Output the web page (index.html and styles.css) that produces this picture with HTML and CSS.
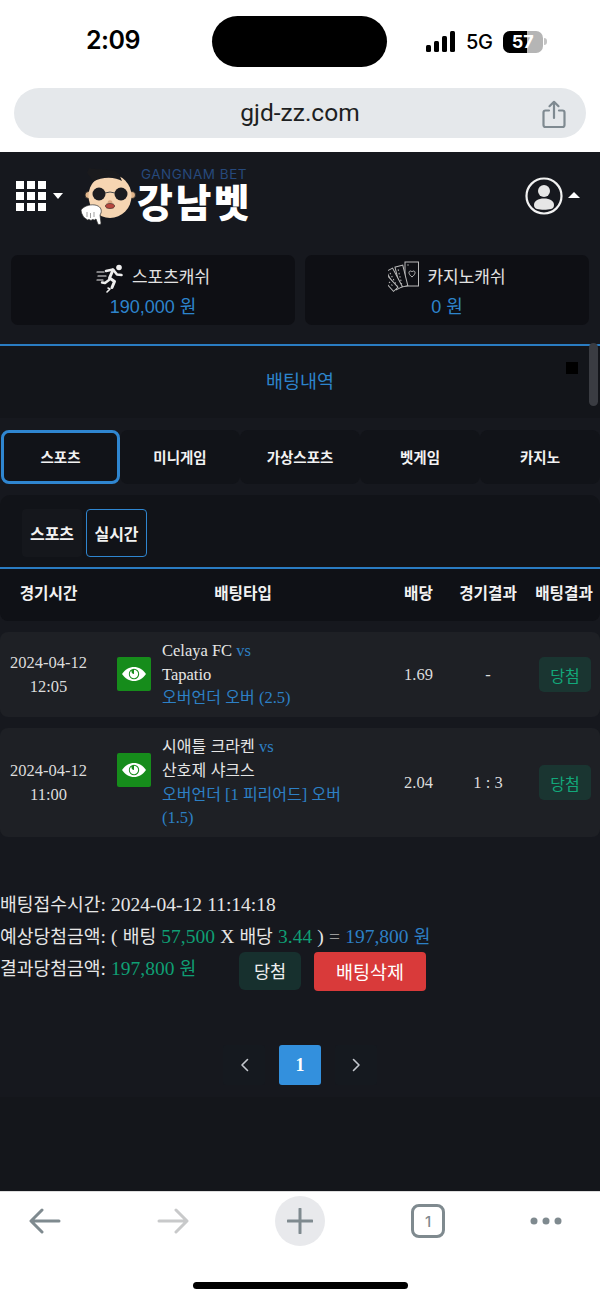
FILE: index.html
```html
<!DOCTYPE html>
<html lang="ko">
<head>
<meta charset="utf-8">
<title>강남벳 배팅내역</title>
<link rel="stylesheet" href="styles.css">
</head>
<body>
<div class="phone">
  <div class="status">
    <span class="clock">2:09</span>
    <span class="island"></span>
    <span class="signal"><i class="b1"></i><i class="b2"></i><i class="b3"></i><i class="b4"></i></span>
    <span class="net">5G</span>
    <span class="battery"><span class="fill"></span><span class="pct">57</span></span>
    <span class="nub"></span>
  </div>
  <div class="urlwrap">
    <div class="urlbar">
      <span></span>
      <span class="url">gjd-zz.com</span>
      <svg class="share" width="24" height="29" viewBox="0 0 24 29" fill="none" stroke="#7f8a91" stroke-width="2.2" stroke-linecap="round" stroke-linejoin="round"><path d="M7 10.5H3.500a2 2 0 0 0-2 2V25a2 2 0 0 0 2 2h17a2 2 0 0 0 2-2V12.500a2 2 0 0 0-2-2H17"/><path d="M12 18V2M7.500 6.200 12 1.800l4.500 4.400"/></svg>
    </div>
  </div>

  <main class="site">
    <header class="top">
      <div class="menu">
        <div class="dots"><i></i><i></i><i></i><i></i><i></i><i></i><i></i><i></i><i></i></div>
        <span class="caret-down"></span>
      </div>
      <div class="logo">
        <svg class="face" width="58" height="60" viewBox="0 0 58 60">
          <circle cx="9.500" cy="30" r="3.500" fill="#e0b48a" stroke="#222" stroke-width=".8"/>
          <circle cx="53" cy="30" r="3.500" fill="#e0b48a" stroke="#222" stroke-width=".8"/>
          <ellipse cx="31" cy="31" rx="21.500" ry="22" fill="#f6d5b2"/>
          <path d="M10 3l3 1 2-.5 3 1 3-.5 3 1 3-.5 3 1 3-.5 3 1 4 3 3 7c-6-4-20-5-29 1l-2-4-4-5z" fill="#1a1a1d"/>
          <circle cx="20" cy="29" r="6.500" fill="#1c1c20"/>
          <circle cx="42" cy="29" r="6.500" fill="#1c1c20"/>
          <path d="M26 28q5-2 10 0" stroke="#4a4a4a" stroke-width="1" fill="none"/>
          <path d="M29 36q2-1.500 4 0l.5 2h-5z" fill="#d9a884"/>
          <ellipse cx="31" cy="41" rx="4.500" ry="2.500" fill="#b8483f" stroke="#2a1a18" stroke-width=".6"/>
          <path d="M2 45c2-3 8-6 14-5 5 1 7 4 6 8l-1 2 1 8c0 2-3 2-3.500 0l-1.500-4-1.500 1-2-.5-1.500 1-2-1-1.500 .5-2-1.500-2-1.500-2-4z" fill="#fff" stroke="#2a2a2a" stroke-width=".7"/>
          <path d="M8 47v5M11.500 48v5M15 47v5" stroke="#777" stroke-width=".7"/>
        </svg>
        <div class="brand">
          <span class="brand-en">GANGNAM BET</span>
          <span class="brand-ko">강남벳</span>
        </div>
      </div>
      <div class="user">
        <svg width="38" height="38" viewBox="0 0 38 38" fill="none"><circle cx="19" cy="19" r="17.500" stroke="#f2f2f2" stroke-width="2.200"/><circle cx="19" cy="14" r="6" fill="#e6e6e6"/><path d="M9 28c0-4 4-6.500 10-6.500S29 24 29 28c0 2-1 3.500-3 4-4 1-10 1-14 0-2-.5-3-2-3-4z" fill="#e6e6e6"/></svg>
        <span class="caret-up"></span>
      </div>
    </header>

    <section class="cash">
      <div class="cash-card">
        <div class="cash-label">
          <svg width="28" height="30" viewBox="0 0 28 30" fill="none" stroke="#eee" stroke-linecap="round" stroke-linejoin="round"><circle cx="23" cy="4.500" r="2.800" fill="#eee" stroke="none"/><path d="M10 8l7-1.500 4 5 4.500 .5" stroke-width="2.600"/><path d="M17 7l-3.500 8 5 3.500-2.500 6" stroke-width="3"/><path d="M13 17l-4 3-3-.5" stroke-width="2.400"/><path d="M12 25l2 1-3 3" stroke-width="1.600"/><path d="M1 9h7M2 13h8M1 17h6" stroke-width="1.200"/></svg>
          <span>스포츠캐쉬</span>
        </div>
        <div class="cash-value">190,000 원</div>
      </div>
      <div class="cash-card">
        <div class="cash-label">
          <svg width="31" height="34" viewBox="0 0 31 34" fill="none" stroke="#bbb" stroke-width="1"><rect x="17" y="1" width="13.500" height="24" fill="#0e0f14"/><g transform="rotate(-14 14 26)"><rect x="12" y="5" width="8" height="21" fill="#0e0f14"/><path d="M14.500 8v15" stroke-dasharray="1.500 2"/></g><g transform="rotate(-28 10 28)"><rect x="8" y="7" width="7" height="21" fill="#0e0f14"/><path d="M10.500 10v15" stroke-dasharray="1.500 2"/></g><g transform="rotate(-42 7 29)"><rect x="5" y="9" width="6" height="20" fill="#0e0f14"/><path d="M8 12v14" stroke-dasharray="1.500 2"/></g><path d="M24 16c-4-3-3.500-6-1.500-6 .8 0 1.200.5 1.500 1 .3-.5.700-1 1.500-1 2 0 2.500 3-1.500 6z"/><circle cx="20" cy="4" r=".7" fill="#bbb" stroke="none"/></svg>
          <span>카지노캐쉬</span>
        </div>
        <div class="cash-value">0 원</div>
      </div>
    </section>

    <section class="title">
      <h1>배팅내역</h1>
      <span class="marker"></span>
      <span class="scrollbar"></span>
    </section>

    <nav class="tabs">
      <a class="tab active">스포츠</a>
      <a class="tab">미니게임</a>
      <a class="tab">가상스포츠</a>
      <a class="tab">벳게임</a>
      <a class="tab">카지노</a>
    </nav>

    <div class="subtabs">
      <a class="sub">스포츠</a>
      <a class="sub sub-on">실시간</a>
    </div>

    <div class="cols thead">
      <span>경기시간</span><span>배팅타입</span><span>배당</span><span>경기결과</span><span>배팅결과</span>
    </div>

    <div class="cols row">
      <div class="when">2024-04-12<br>12:05</div>
      <div class="match">
        <span class="eye"><svg width="26" height="16" viewBox="0 0 26 16"><path d="M1 8c3-4.500 7.500-7 12-7s9 2.500 12 7c-3 4.500-7.500 7-12 7S4 12.500 1 8z" fill="#fff"/><circle cx="13" cy="8" r="5.200" fill="#168c1b"/><path d="M13 3.800a4.200 4.200 0 1 1-2.500 .8c-.3 2 .8 3.400 2.500 3.400z" fill="#fff"/></svg></span>
        <div class="info">
          <div>Celaya FC <em>vs</em></div>
          <div>Tapatio</div>
          <div class="pick"><span class="ko">오버언더 오버</span> (2.5)</div>
        </div>
      </div>
      <div>1.69</div>
      <div>-</div>
      <div class="res"><span class="win">당첨</span></div>
    </div>

    <div class="cols row">
      <div class="when">2024-04-12<br>11:00</div>
      <div class="match">
        <span class="eye"><svg width="26" height="16" viewBox="0 0 26 16"><path d="M1 8c3-4.500 7.500-7 12-7s9 2.500 12 7c-3 4.500-7.500 7-12 7S4 12.500 1 8z" fill="#fff"/><circle cx="13" cy="8" r="5.200" fill="#168c1b"/><path d="M13 3.800a4.200 4.200 0 1 1-2.500 .8c-.3 2 .8 3.400 2.500 3.400z" fill="#fff"/></svg></span>
        <div class="info">
          <div><span class="ko">시애틀 크라켄</span> <em>vs</em></div>
          <div><span class="ko">산호제 샤크스</span></div>
          <div class="pick"><span class="ko">오버언더</span> [1 <span class="ko">피리어드</span>] <span class="ko">오버</span><br>(1.5)</div>
        </div>
      </div>
      <div>2.04</div>
      <div>1 : 3</div>
      <div class="res"><span class="win">당첨</span></div>
    </div>

    <section class="summary">
      <p><span class="ko">배팅접수시간</span>: 2024-04-12 11:14:18</p>
      <p><span class="ko">예상당첨금액</span>: ( <span class="ko">배팅</span> <b>57,500</b> X <span class="ko">배당</span> <b>3.44</b> ) <s>=</s> <u>197,800 <span class="ko">원</span></u></p>
      <div class="result-line">
        <p class="result-text"><span class="ko">결과당첨금액</span>: <b>197,800 <span class="ko">원</span></b></p>
        <a class="btn-win">당첨</a>
        <a class="btn-del">배팅삭제</a>
      </div>
    </section>

    <nav class="pager">
      <a class="page"><svg width="9" height="14" viewBox="0 0 9 14" fill="none" stroke="#c4c8ce" stroke-width="1.600" stroke-linecap="round" stroke-linejoin="round"><path d="M7.500 1.500 2 7l5.500 5.500"/></svg></a>
      <a class="page current">1</a>
      <a class="page"><svg width="9" height="14" viewBox="0 0 9 14" fill="none" stroke="#c4c8ce" stroke-width="1.600" stroke-linecap="round" stroke-linejoin="round"><path d="M1.500 1.500 7 7l-5.500 5.500"/></svg></a>
    </nav>
    <div class="site-foot"></div>
  </main>

  <footer class="browser">
    <div class="tools">
      <svg class="t-back" width="32" height="26" viewBox="0 0 32 26" fill="none" stroke="#7f8a8f" stroke-width="3" stroke-linecap="round" stroke-linejoin="round"><path d="M30 13H3M13 2 2 13l11 11"/></svg>
      <svg class="t-fwd" width="32" height="26" viewBox="0 0 32 26" fill="none" stroke="#c8c9ca" stroke-width="3" stroke-linecap="round" stroke-linejoin="round"><path d="M2 13h27M19 2l11 11-11 11"/></svg>
      <span class="plus"><svg width="26" height="26" viewBox="0 0 26 26" fill="none" stroke="#7f8a8f" stroke-width="3" stroke-linecap="round"><path d="M13 1v24M1 13h24"/></svg></span>
      <span class="tabcount">1</span>
      <svg class="t-more" width="32" height="8" viewBox="0 0 32 8" fill="#7f8a8f"><circle cx="4" cy="4" r="3.500"/><circle cx="16" cy="4" r="3.500"/><circle cx="28" cy="4" r="3.500"/></svg>
    </div>
    <span class="home"></span>
  </footer>
</div>
</body>
</html>
```

FILE: styles.css
```css
* { box-sizing: border-box; }
html, body { margin: 0; padding: 0; background: #fff; }
.phone {
  width: 600px; height: 1300px; overflow: hidden;
  display: flex; flex-direction: column;
  font-family: "Liberation Sans", "Noto Sans CJK KR", sans-serif;
}
p, h1 { margin: 0; font-weight: normal; }
em { font-style: normal; }

/* status bar */
.status { height: 88px; flex: none; display: flex; align-items: flex-start; padding-left: 86px; color: #000; }
.clock { width: 53px; margin-top: 25px; font: 600 25px/30px Inter, sans-serif; white-space: nowrap; letter-spacing: -.5px; }
.island { width: 175px; height: 51px; margin: 16px 0 0 73px; border-radius: 26px; background: #000; }
.signal { display: flex; align-items: flex-end; gap: 3px; height: 21px; margin: 31px 0 0 39px; }
.signal i { width: 5px; border-radius: 1.500px; background: #000; }
.b1 { height: 7px; } .b2 { height: 11px; } .b3 { height: 16px; } .b4 { height: 21px; }
.net { margin: 29px 0 0 11px; font: 500 20px/26px Inter, sans-serif; letter-spacing: -.3px; }
.battery { position: relative; width: 40px; height: 22px; margin: 31px 0 0 10px; border-radius: 7px; background: #b5b5b5; overflow: hidden; text-align: center; }
.fill { position: absolute; inset: 0 16px 0 0; background: #000; }
.pct { position: relative; color: #fff; font: 700 18px/22px Inter, sans-serif; }
.nub { width: 3px; height: 7px; margin: 38px 0 0 1px; background: #c4c4c4; border-radius: 0 3px 3px 0; }

/* url bar */
.urlwrap { height: 64px; flex: none; padding: 0 14px; }
.urlbar { height: 50px; border-radius: 25px; background: #e5e8eb; display: grid; grid-template-columns: 1fr auto 1fr; align-items: center; justify-items: end; padding-right: 20px; }
.url { font: 400 24.500px/30px Roboto, sans-serif; color: #1d1f22; margin-left: 20px; }
.share { margin-top: 2px; }

/* site */
.site { flex: none; height: 1039px; background: #16181e; display: flex; flex-direction: column; overflow: hidden; color: #fff; }
.top { height: 103px; flex: none; display: flex; align-items: flex-start; padding-left: 16px; }
.menu { display: flex; align-items: center; gap: 7px; margin-top: 29px; }
.dots { display: grid; grid-template-columns: repeat(3, 8px); grid-auto-rows: 8px; gap: 3px; }
.dots i { background: #fff; }
.caret-down { width: 0; height: 0; border: 5.500px solid transparent; border-top: 6px solid #fff; border-bottom: 0; }
.caret-up { width: 0; height: 0; border: 6.500px solid transparent; border-bottom: 6px solid #fff; border-top: 0; margin-top: -3px; }
.logo { display: flex; align-items: flex-start; margin: 13px 0 0 16px; }
.brand { display: flex; flex-direction: column; margin-left: 0; width: 115px; }
.brand-en { font: 400 13.500px/14px Inter, sans-serif; color: #26497c; letter-spacing: .5px; margin: 2px 0 0 4px; white-space: nowrap; }
.brand-ko { font: 900 39px/36px "Noto Sans CJK KR", sans-serif; color: #fff; letter-spacing: 2.500px; white-space: nowrap; margin-top: 1px; }
.user { margin: 25px 20px 0 auto; display: flex; align-items: center; gap: 5px; }

.cash { height: 70px; flex: none; margin: 0 11px; display: grid; grid-template-columns: 284px 284px; gap: 10px; }
.cash-card { background: #0e0f14; border-radius: 7px; text-align: center; padding-top: 8px; }
.cash-label { display: flex; justify-content: center; align-items: center; gap: 8px; height: 30px; font: 400 17px/30px "Liberation Sans", "Noto Sans CJK KR", sans-serif; color: #e2e2e2; }
.cash-value { font-size: 18px; line-height: 24px; color: #2d84cc; margin-top: 2px; }

.title { position: relative; flex: none; height: 74px; margin-top: 19px; border-top: 2px solid #2a7cc2; background: #13151a; display: flex; align-items: center; justify-content: center; }
.title h1 { font-size: 18.500px; color: #2d84cc; margin-top: -5px; }
.marker { position: absolute; left: 566px; top: 16px; width: 12px; height: 12px; background: #000; }
.scrollbar { position: absolute; left: 589px; top: -3px; width: 9px; height: 63px; border-radius: 5px; background: #3a3c42; }

.tabs { flex: none; height: 54px; margin-top: 12px; display: grid; grid-template-columns: repeat(5, 120px); }
.tab { display: flex; align-items: center; justify-content: center; background: #111318; border-radius: 8px; font-size: 14.500px; font-weight: 700; color: #f2f2f2; padding-bottom: 2px; }
.tab.active { border: 3px solid #2f86d0; margin-left: 1px; }

.subtabs { flex: none; height: 74px; margin-top: 11px; padding: 14px 22px 0; background: #111318; border-radius: 10px 10px 0 0; border-bottom: 2px solid #2a7cc2; display: flex; gap: 4px; align-items: flex-start; }
.sub { width: 60px; height: 48px; display: flex; align-items: center; justify-content: center; background: #15171c; font-size: 16px; font-weight: 700; border-radius: 4px; color: #f2f2f2; }
.sub-on { width: 61px; background: #111318; border: 1px solid #2f86d0; }

.cols { display: grid; grid-template-columns: 97px 292px 59px 80px 72px; align-items: center; text-align: center; }
.thead { flex: none; height: 52px; background: #0f1116; border-radius: 0 0 8px 8px; font-size: 15.700px; font-weight: 700; color: #f2f2f2; padding-bottom: 5px; }
.row { flex: none; margin-top: 11px; padding: 7px 0; background: #1e2025; border-radius: 8px; font: 400 16.500px/23.700px "Liberation Serif", "Noto Sans CJK KR", serif; color: #dcdcdc; }
.ko { font-family: "Noto Sans CJK KR", sans-serif; font-size: 16px; line-height: 1; }
.match { display: flex; align-items: flex-start; text-align: left; padding-left: 20px; gap: 11px; }
.eye { width: 34px; height: 34px; flex: none; display: flex; align-items: center; justify-content: center; background: #168c1b; border-radius: 2px; margin-top: 18px; }
.info { color: #e6e6e6; }
.info em, .pick { color: #2d80c6; }
.res { display: flex; justify-content: center; }
.win { width: 52px; height: 35px; display: flex; align-items: center; justify-content: center; border-radius: 5px; background: #1a3531; color: #12a87a; font: 400 16px/1 "Noto Sans CJK KR", sans-serif; margin-left: 2px; }

.summary { flex: none; margin-top: 52px; font: 400 19.500px/32px "Liberation Serif", "Noto Sans CJK KR", serif; color: #e6e6e6; white-space: nowrap; word-spacing: .3px; }
.summary .ko { font-size: 18.200px; }
.summary b { font-weight: 400; color: #0f9f74; }
.summary u { text-decoration: none; color: #2d80c6; }
.summary s { text-decoration: none; color: #9a9a9a; }
.result-line { display: flex; align-items: flex-start; height: 41px; }
.result-text { width: 239px; }
.btn-win { width: 62px; height: 38px; margin-top: -1px; display: flex; align-items: center; justify-content: center; background: #17302e; border-radius: 6px; font: 400 17.500px/1 "Noto Sans CJK KR", sans-serif; color: #eee; }
.btn-del { width: 112px; height: 39px; margin: -1px 0 0 13px; display: flex; align-items: center; justify-content: center; background: #d93a3a; border-radius: 4px; font: 400 18.500px/1 "Noto Sans CJK KR", sans-serif; color: #fff; }

.pager { flex: none; margin-top: 51px; height: 40px; display: flex; justify-content: center; gap: 14px; }
.page { width: 42px; height: 40px; display: flex; align-items: center; justify-content: center; background: #15191f; border-radius: 3px; }
.page.current { background: #3390dd; color: #fff; font: 700 18px/1 "Liberation Serif", serif; }
.site-foot { flex: 1; margin-top: 12px; background: #14161b; }

/* browser toolbar */
.browser { flex: 1; background: #fff; border-top: 1px solid #ddd; }
.tools { display: flex; align-items: center; height: 50px; margin-top: 4px; padding-left: 29px; }
.t-fwd { margin-left: 96px; }
.plus { width: 50px; height: 50px; margin-left: 86px; border-radius: 50%; background: #e8e9ec; display: flex; align-items: center; justify-content: center; }
.tabcount { width: 34px; height: 34px; margin-left: 86px; border: 3px solid #7f8a8f; border-radius: 8px; display: flex; align-items: center; justify-content: center; font: 500 15px/1 Inter, sans-serif; color: #7f8a8f; }
.t-more { margin-left: 85px; }
.home { display: block; width: 215px; height: 7px; margin: 36px auto 0; border-radius: 4px; background: #000; }
```
